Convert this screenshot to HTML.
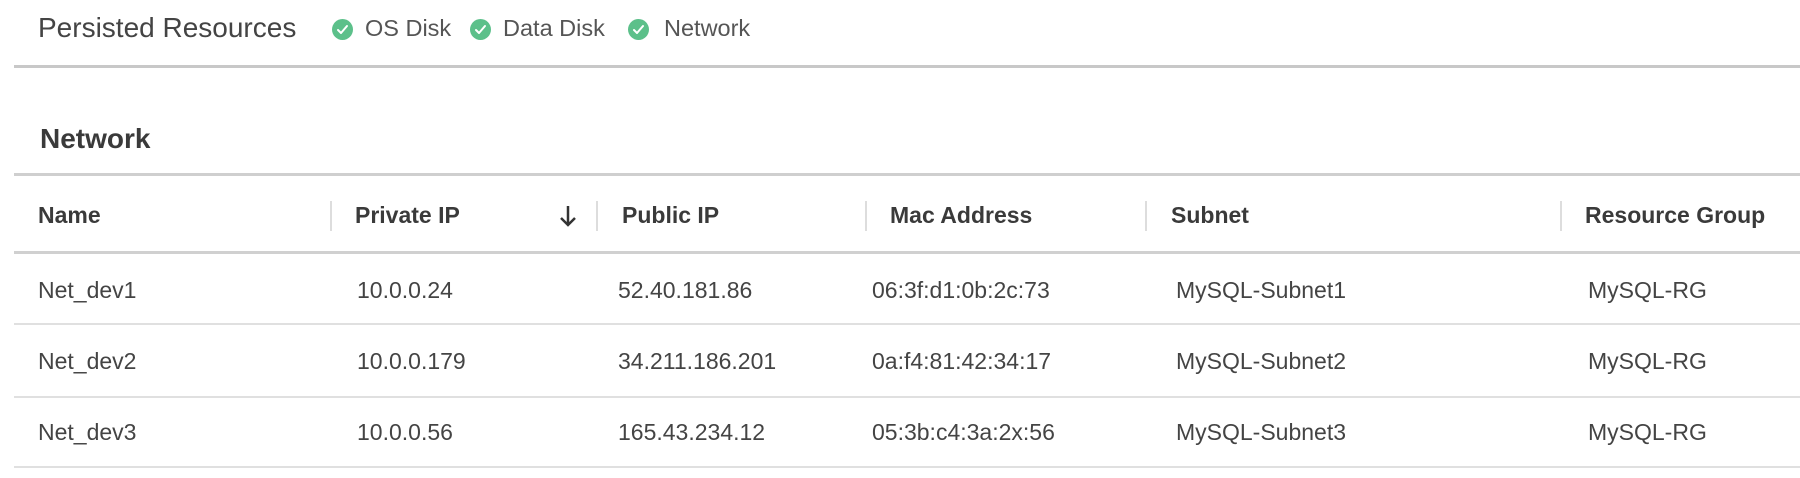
<!DOCTYPE html>
<html><head><meta charset="utf-8"><style>
html,body{margin:0;padding:0;width:1800px;height:478px;background:#fff;overflow:hidden;font-family:"Liberation Sans",sans-serif;}
.a{position:absolute;white-space:nowrap;line-height:1;}
.h{font-size:28px;color:#444;top:14px;}
.c{font-size:23.5px;color:#555;top:17px;}
.ic{position:absolute;width:21px;height:21px;border-radius:50%;background:#5cc08a;top:19px;}
.ic svg{position:absolute;left:0;top:0;}
.th{font-size:23px;font-weight:bold;color:#3a3a3a;top:204px;}
.td{font-size:23px;color:#444;}
.ln{position:absolute;left:14px;right:0;}
.sep{position:absolute;width:2px;background:#ddd;top:201px;height:30px;}
</style></head><body>
<div class="a h" style="left:38px">Persisted Resources</div>
<div class="ic" style="left:332px"><svg width="21" height="21"><path d="M6 11l3 3 6-7" stroke="#fff" stroke-width="2" fill="none" stroke-linecap="round" stroke-linejoin="round"/></svg></div>
<div class="a c" style="left:365px">OS Disk</div>
<div class="ic" style="left:470px"><svg width="21" height="21"><path d="M6 11l3 3 6-7" stroke="#fff" stroke-width="2" fill="none" stroke-linecap="round" stroke-linejoin="round"/></svg></div>
<div class="a c" style="left:503px">Data Disk</div>
<div class="ic" style="left:628px"><svg width="21" height="21"><path d="M6 11l3 3 6-7" stroke="#fff" stroke-width="2" fill="none" stroke-linecap="round" stroke-linejoin="round"/></svg></div>
<div class="a c" style="left:664px">Network</div>
<div class="ln" style="top:65px;height:3px;background:#c8c8c8"></div>
<div class="a" style="left:40px;top:125px;font-size:28px;font-weight:bold;color:#3a3a3a">Network</div>
<div class="ln" style="top:173px;height:3px;background:#cfcfcf"></div>

<div class="a th" style="left:38px">Name</div>
<div class="sep" style="left:330px"></div>
<div class="a th" style="left:355px">Private IP</div>
<svg style="position:absolute;left:558px;top:204px" width="20" height="24"><path d="M10 2v19M3 14l7 7 7-7" stroke="#333" stroke-width="2.5" fill="none"/></svg>
<div class="sep" style="left:596px"></div>
<div class="a th" style="left:622px">Public IP</div>
<div class="sep" style="left:865px"></div>
<div class="a th" style="left:890px">Mac Address</div>
<div class="sep" style="left:1145px"></div>
<div class="a th" style="left:1171px">Subnet</div>
<div class="sep" style="left:1560px"></div>
<div class="a th" style="left:1585px">Resource Group</div>
<div class="ln" style="top:251px;height:3px;background:#d0d0d0"></div>

<div class="a td" style="left:38px;top:279px">Net_dev1</div>
<div class="a td" style="left:357px;top:279px">10.0.0.24</div>
<div class="a td" style="left:618px;top:279px">52.40.181.86</div>
<div class="a td" style="left:872px;top:279px">06:3f:d1:0b:2c:73</div>
<div class="a td" style="left:1176px;top:279px">MySQL-Subnet1</div>
<div class="a td" style="left:1588px;top:279px">MySQL-RG</div>
<div class="ln" style="top:323px;height:2px;background:#e0e0e0"></div>

<div class="a td" style="left:38px;top:350px">Net_dev2</div>
<div class="a td" style="left:357px;top:350px">10.0.0.179</div>
<div class="a td" style="left:618px;top:350px">34.211.186.201</div>
<div class="a td" style="left:872px;top:350px">0a:f4:81:42:34:17</div>
<div class="a td" style="left:1176px;top:350px">MySQL-Subnet2</div>
<div class="a td" style="left:1588px;top:350px">MySQL-RG</div>
<div class="ln" style="top:396px;height:2px;background:#e0e0e0"></div>

<div class="a td" style="left:38px;top:421px">Net_dev3</div>
<div class="a td" style="left:357px;top:421px">10.0.0.56</div>
<div class="a td" style="left:618px;top:421px">165.43.234.12</div>
<div class="a td" style="left:872px;top:421px">05:3b:c4:3a:2x:56</div>
<div class="a td" style="left:1176px;top:421px">MySQL-Subnet3</div>
<div class="a td" style="left:1588px;top:421px">MySQL-RG</div>
<div class="ln" style="top:466px;height:2px;background:#e0e0e0"></div>
</body></html>
